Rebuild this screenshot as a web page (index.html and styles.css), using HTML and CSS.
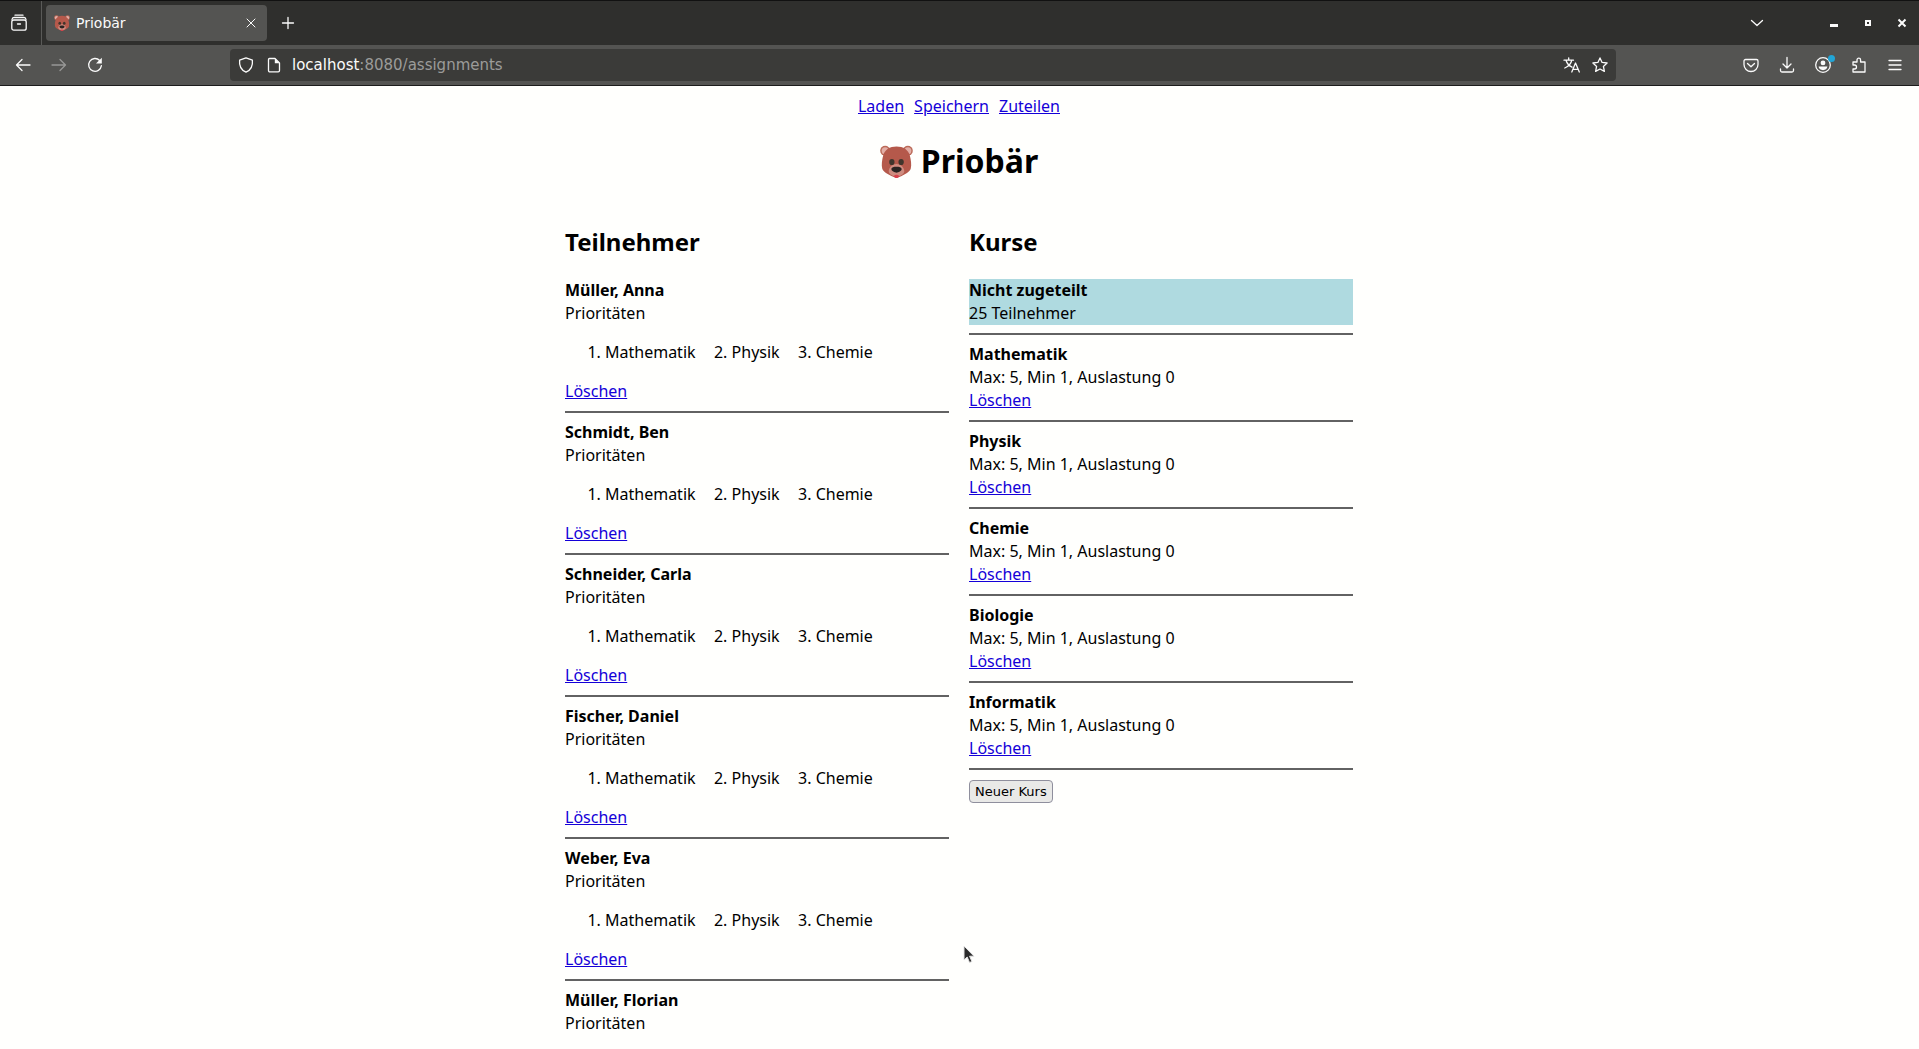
FILE: index.html
```html
<!DOCTYPE html>
<html lang="de">
<head>
<meta charset="utf-8">
<title>Priobär</title>
<link rel="stylesheet" href="styles.css">
</head>
<body>
<svg class="defs" aria-hidden="true">
  <symbol id="bear" viewBox="0 0 32 32">
    <circle cx="5" cy="5.500" r="4.800" fill="#bb6a58"/><circle cx="27" cy="5.500" r="4.800" fill="#bb6a58"/>
    <circle cx="5" cy="5.500" r="3.400" fill="#e3aea6"/><circle cx="27" cy="5.500" r="3.400" fill="#e3aea6"/>
    <path d="M16 1.500c6.500 0 11.500 3 13 9 1 4 1.800 9 .8 12.500-1.200 3.500-5.500 5-8.800 7-3 1.800-7 1.800-10 0-3.300-2-7.600-3.500-8.800-7-1-3.500-.2-8.500.8-12.500 1.500-6 6.500-9 13-9z" fill="#b5594b"/>
    <path d="M16 18.500c4 0 7 3 7.500 6.500.3 3-3.500 5.500-7.500 5.500S8.200 28 8.500 25c.5-3.500 3.500-6.500 7.500-6.500z" fill="#cf8c80"/>
    <ellipse cx="11.500" cy="16.500" rx="2.600" ry="3" fill="#40352c"/><ellipse cx="20.500" cy="16.500" rx="2.600" ry="3" fill="#40352c"/>
    <path d="M11 23.300c0-1.600 2.400-2.100 5-2.100s5 .5 5 2.100c0 1.900-3.200 3.500-5 3.500s-5-1.600-5-3.500z" fill="#2b2422"/>
    <path d="M13.300 30c1.600-1.500 3.800-1.500 5.400 0-.5 1.700-1.600 2-2.700 2s-2.200-.3-2.700-2z" fill="#d8414b"/>
  </symbol>
</svg>

<header class="browser">
  <div class="tabbar">
    <button class="tool" aria-label="Firefox View"><svg class="icon" viewBox="0 0 16 16"><rect x=".8" y="5" width="14.400" height="10.200" rx="2"/><path d="M1 4.500C1.200 3 2 2.500 3 2.500h10c1 0 1.800.5 2 2M4 .2h8M6.500 9h3"/></svg></button>
    <div class="tab">
      <svg class="favicon"><use href="#bear"/></svg>
      <span class="tab-title">Priobär</span>
      <button class="tab-close" aria-label="Tab schließen"><svg class="icon small" viewBox="0 0 10 10"><path d="M1 1l8 8M9 1L1 9"/></svg></button>
    </div>
    <button class="tool" aria-label="Neuer Tab"><svg class="icon" viewBox="0 0 16 16"><path d="M8 2.500v11M2.500 8h11"/></svg></button>
    <div class="window-controls">
      <button class="tool chevron" aria-label="Alle Tabs"><svg class="icon" viewBox="0 0 16 16"><path d="M2.500 5.500L8 10.500l5.500-5"/></svg></button>
      <button class="win" aria-label="Minimieren"><svg class="glyph" viewBox="0 0 10 10"><path d="M1 6h8v3H1z"/></svg></button>
      <button class="win" aria-label="Wiederherstellen"><svg class="glyph" viewBox="0 0 10 10"><path fill-rule="evenodd" d="M2 2h6v6H2zM4 4v2h2V4z"/></svg></button>
      <button class="win" aria-label="Schließen"><svg class="glyph stroke" viewBox="0 0 10 10"><path d="M1.500 1.500l7 7M8.500 1.500l-7 7"/></svg></button>
    </div>
  </div>
  <div class="toolbar">
    <button class="tool" aria-label="Zurück"><svg class="icon" viewBox="0 0 16 16"><path d="M15 8H1.500M7 2.500L1.500 8 7 13.500"/></svg></button>
    <button class="tool" aria-label="Vor" disabled><svg class="icon" viewBox="0 0 16 16"><path d="M1 8h13.500M9 2.500L14.500 8 9 13.500"/></svg></button>
    <button class="tool" aria-label="Neu laden"><svg class="icon" viewBox="0 0 16 16"><path d="M12.700 3.500A6.400 6.400 0 1 0 14.400 8.700"/><path class="solid" d="M14.800.8v5.800H9z"/></svg></button>
    <div class="urlbar">
      <svg class="icon" viewBox="0 0 16 16"><path d="M8 .9l6.400 2.300c.5 5-1.500 9.800-6.400 12C3.100 13 1.100 8.200 1.600 3.200z"/></svg>
      <svg class="icon" viewBox="0 0 16 16"><path d="M3.500 1.500H9l4.500 4.500v7.500a1.300 1.300 0 0 1-1.300 1.300H3.800a1.300 1.300 0 0 1-1.300-1.300v-11a1 1 0 0 1 1-1z"/><path class="solid" d="M8.800 1.500v4.700h4.700z"/></svg>
      <span class="url"><b>localhost</b>:8080/assignments</span>
      <button class="urlbutton" aria-label="Übersetzen"><svg class="icon" viewBox="0 0 16 16"><path d="M0 3.200h9.500M4.700.8v2.400M2 3.200c1 3.500 3 5.500 6 7M7.800 3.200C7 7 4.500 9.500.8 11M7.800 15l3.700-9 3.800 9M9 12.300h5"/></svg></button>
      <button class="urlbutton" aria-label="Lesezeichen"><svg class="icon" viewBox="0 0 16 16"><path d="M8 .9l2.100 4.500 5 .6-3.700 3.400 1 5L8 12l-4.400 2.400 1-5L.9 6l5-.6z"/></svg></button>
    </div>
    <button class="tool" aria-label="Pocket"><svg class="icon" viewBox="0 0 16 16"><path d="M2.500 2.500h11a1.500 1.500 0 0 1 1.500 1.500v3.500a7 7 0 0 1-14 0V4a1.500 1.500 0 0 1 1.500-1.500zM4.500 6.500L8 9.800l3.500-3.300"/></svg></button>
    <button class="tool" aria-label="Downloads"><svg class="icon" viewBox="0 0 16 16"><path d="M8 .5v10.500M4 7l4 4 4-4M1.500 12v1.500c0 .9.600 1.500 1.500 1.500h10c.9 0 1.500-.6 1.500-1.500V12"/></svg></button>
    <button class="tool account" aria-label="Konto"><svg class="icon" viewBox="0 0 16 16"><circle cx="8" cy="8" r="7.300"/><circle class="solid" cx="8" cy="5.900" r="2.400"/><path class="solid" d="M3.600 9.600h8.800c-.2 2.200-2 3.600-4.400 3.600s-4.200-1.400-4.400-3.600z"/></svg></button>
    <button class="tool" aria-label="Erweiterungen"><svg class="icon" viewBox="0 0 16 16"><path d="M2 8V5h4V3a1.800 1.800 0 0 1 3.600 0v2H14v10H2v-3h1.500a2 2 0 0 0 0-4z"/></svg></button>
    <button class="tool" aria-label="Menü"><svg class="icon" viewBox="0 0 16 16"><path d="M2 3.500h12M2 8h12M2 12.500h12"/></svg></button>
  </div>
</header>

<main class="page">
  <nav class="actions">
    <a href="#laden">Laden</a>
    <a href="#speichern">Speichern</a>
    <a href="#zuteilen">Zuteilen</a>
  </nav>
  <h1><svg class="logo" role="img" aria-label="Bär"><use href="#bear"/></svg>Priobär</h1>
  <div class="columns">
    <section>
      <h2>Teilnehmer</h2>
      <div><strong>Müller, Anna</strong></div>
      <div>Prioritäten</div>
      <ol class="prios"><li>Mathematik</li><li>Physik</li><li>Chemie</li></ol>
      <a href="#t1">Löschen</a>
      <hr>
      <div><strong>Schmidt, Ben</strong></div>
      <div>Prioritäten</div>
      <ol class="prios"><li>Mathematik</li><li>Physik</li><li>Chemie</li></ol>
      <a href="#t2">Löschen</a>
      <hr>
      <div><strong>Schneider, Carla</strong></div>
      <div>Prioritäten</div>
      <ol class="prios"><li>Mathematik</li><li>Physik</li><li>Chemie</li></ol>
      <a href="#t3">Löschen</a>
      <hr>
      <div><strong>Fischer, Daniel</strong></div>
      <div>Prioritäten</div>
      <ol class="prios"><li>Mathematik</li><li>Physik</li><li>Chemie</li></ol>
      <a href="#t4">Löschen</a>
      <hr>
      <div><strong>Weber, Eva</strong></div>
      <div>Prioritäten</div>
      <ol class="prios"><li>Mathematik</li><li>Physik</li><li>Chemie</li></ol>
      <a href="#t5">Löschen</a>
      <hr>
      <div><strong>Müller, Florian</strong></div>
      <div>Prioritäten</div>
    </section>
    <section>
      <h2>Kurse</h2>
      <div class="selected">
        <div><strong>Nicht zugeteilt</strong></div>
        <div>25 Teilnehmer</div>
      </div>
      <hr>
      <div><strong>Mathematik</strong></div>
      <div>Max: 5, Min 1, Auslastung 0</div>
      <a href="#k1">Löschen</a>
      <hr>
      <div><strong>Physik</strong></div>
      <div>Max: 5, Min 1, Auslastung 0</div>
      <a href="#k2">Löschen</a>
      <hr>
      <div><strong>Chemie</strong></div>
      <div>Max: 5, Min 1, Auslastung 0</div>
      <a href="#k3">Löschen</a>
      <hr>
      <div><strong>Biologie</strong></div>
      <div>Max: 5, Min 1, Auslastung 0</div>
      <a href="#k4">Löschen</a>
      <hr>
      <div><strong>Informatik</strong></div>
      <div>Max: 5, Min 1, Auslastung 0</div>
      <a href="#k5">Löschen</a>
      <hr>
      <button class="new-course">Neuer Kurs</button>
    </section>
  </div>
</main>
<svg class="pointer" viewBox="0 0 12 20" aria-hidden="true"><path d="M1 1v14l3.200-3 2.300 5.500 2.400-1-2.300-5.300H11z"/></svg>
</body>
</html>
```
FILE: styles.css
```css
* { box-sizing: border-box; }

body {
  margin: 0;
  height: 100vh;
  display: flex;
  flex-direction: column;
  overflow: hidden;
  background: #fffffd;
  color: #000;
  font: 16px/23px "Noto Sans", sans-serif;
}

.defs { display: none; }

/* Browser window */
.browser {
  flex: none;
  color: #fbfbfb;
  font-family: "DejaVu Sans", sans-serif;
}

.browser button {
  display: flex;
  align-items: center;
  justify-content: center;
  padding: 0;
  border: 0;
  background: none;
  color: inherit;
}

.tabbar {
  display: flex;
  align-items: center;
  height: 45px;
  border-top: 1px solid #111;
  background: #2f2f2d;
}

.browser .tabbar > .tool:first-child {
  width: 42px;
  height: 44px;
  padding-right: 4px;
  border-right: 1px solid #5a5a58;
}

.tab {
  display: flex;
  align-items: center;
  width: 221px;
  height: 36px;
  margin: 0 3px 0 4px;
  padding: 0 8px;
  border-radius: 4px;
  background: #545452;
}

.favicon { width: 16px; height: 16px; }
.tab-title { flex: 1; margin-left: 6px; font-size: 14px; }
.browser .tab-close { width: 16px; height: 16px; }

.tool { width: 36px; height: 36px; }
.tool:disabled { opacity: 0.4; }

.window-controls { display: flex; align-items: center; margin-left: auto; }
.browser .chevron { margin-right: 42px; }
.win { width: 34px; height: 36px; }
.glyph { width: 10px; height: 10px; fill: currentColor; }
.glyph.stroke { stroke: currentColor; stroke-width: 2; }

.icon {
  width: 16px;
  height: 16px;
  overflow: visible;
  fill: none;
  stroke: currentColor;
  stroke-width: 1.300;
  stroke-linecap: round;
  stroke-linejoin: round;
}
.icon.small { width: 10px; height: 10px; stroke-width: 1; }
.icon .solid { fill: currentColor; stroke: none; }

.toolbar {
  display: flex;
  align-items: center;
  height: 41px;
  padding: 0 6px 0 5px;
  border-bottom: 1px solid #1c1c1c;
  background: #545452;
}

.urlbar {
  flex: 1;
  display: flex;
  align-items: center;
  gap: 12px;
  height: 32px;
  margin: 0 117px;
  padding: 0 8px;
  border-radius: 4px;
  background: #3b3b39;
}

.url { flex: 1; margin-left: -2px; color: #9b9b99; font-size: 15px; }
.url b { color: #fbfbfb; font-weight: normal; }

.account { position: relative; }
.account::after {
  content: "";
  position: absolute;
  top: 8px;
  right: 6px;
  width: 7px;
  height: 7px;
  border-radius: 50%;
  background: #22a5d6;
}

/* Page content */
.page { padding: 9px 9px 8px 8px; }

a { color: #1400d8; }

.actions { display: flex; justify-content: center; gap: 10px; }

h1 {
  display: flex;
  align-items: center;
  justify-content: center;
  gap: 8px;
  margin: 21px 0 23px;
  font-size: 32px;
  line-height: 44px;
}

.logo { width: 33px; height: 33px; }

.columns {
  display: grid;
  grid-template-columns: 384px 384px;
  justify-content: center;
  gap: 20px;
}

h2 { margin: 19px 0 21px; font-size: 24px; line-height: 33px; }

hr { height: 2px; margin: 8px 0; border: 0; background: #626262; }

.prios {
  display: flex;
  gap: 36px;
  margin: 16px 0;
  padding-left: 40px;
}

.selected { background: #afdae0; }

.new-course {
  display: block;
  height: 23px;
  margin-top: 10px;
  padding: 0 5px;
  border: 1px solid #8f8f9d;
  border-radius: 4px;
  background: #e9e9e7;
  color: #000;
  font: 13px/16px "DejaVu Sans", sans-serif;
}

.pointer {
  position: absolute;
  top: 945px;
  left: 50%;
  width: 12px;
  height: 20px;
  margin-left: 3px;
  fill: #2b2b2b;
  stroke: #e4e4e4;
  stroke-width: 1;
}
```
